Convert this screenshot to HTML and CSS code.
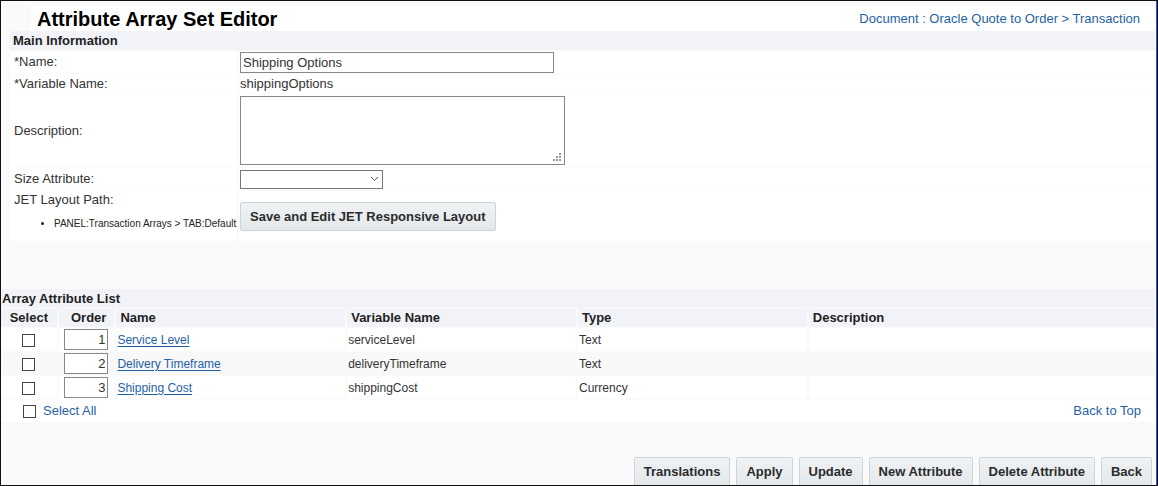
FILE: index.html
```html
<!DOCTYPE html>
<html lang="en">

<head>
  <meta charset="UTF-8">
  <meta name="viewport" content="width=device-width, initial-scale=1.0">
  <link rel="stylesheet" href="styles.css">
  <title>Attribute Array Set Editor</title>
</head>

<body>
  <form class="page" id="top">
    <div class="header">
      <h1>Attribute Array Set Editor</h1>
      <a href="#">Document : Oracle Quote to Order &gt; Transaction</a>
    </div>

    <div class="mainInfo">
      <h2>Main Information</h2>
      <div class="field nameField">
        <label for="name">*Name:</label>
        <div class="value"><input type="text" id="name" value="Shipping Options"></div>
      </div>
      <div class="field varField">
        <span class="label">*Variable Name:</span>
        <div class="value">shippingOptions</div>
      </div>
      <div class="field descField">
        <label for="description">Description:</label>
        <div class="value"><textarea id="description"></textarea></div>
      </div>
      <div class="field sizeField">
        <label for="size">Size Attribute:</label>
        <div class="value">
          <select id="size">
            <option></option>
          </select>
        </div>
      </div>
      <div class="field layoutField">
        <div class="label">
          JET Layout Path:
          <ul>
            <li>PANEL:Transaction Arrays &gt; TAB:Default</li>
          </ul>
        </div>
        <div class="value"><button type="button" class="btn">Save and Edit JET Responsive Layout</button></div>
      </div>
    </div>

    <div class="attrList">
      <h2 id="listTitle">Array Attribute List</h2>
      <table aria-labelledby="listTitle">
        <colgroup>
          <col class="narrow">
          <col class="narrow">
          <col class="medium">
          <col class="medium">
          <col class="medium">
          <col>
        </colgroup>
        <thead>
          <tr>
            <th class="center">Select</th>
            <th class="right">Order</th>
            <th>Name</th>
            <th>Variable Name</th>
            <th>Type</th>
            <th>Description</th>
          </tr>
        </thead>
        <tbody>
          <tr>
            <td class="select"><input type="checkbox" aria-label="Select Service Level"></td>
            <td class="order"><input type="text" value="1" aria-label="Order of Service Level"></td>
            <td><a href="#">Service Level</a></td>
            <td>serviceLevel</td>
            <td>Text</td>
            <td></td>
          </tr>
          <tr>
            <td class="select"><input type="checkbox" aria-label="Select Delivery Timeframe"></td>
            <td class="order"><input type="text" value="2" aria-label="Order of Delivery Timeframe"></td>
            <td><a href="#">Delivery Timeframe</a></td>
            <td>deliveryTimeframe</td>
            <td>Text</td>
            <td></td>
          </tr>
          <tr>
            <td class="select"><input type="checkbox" aria-label="Select Shipping Cost"></td>
            <td class="order"><input type="text" value="3" aria-label="Order of Shipping Cost"></td>
            <td><a href="#">Shipping Cost</a></td>
            <td>shippingCost</td>
            <td>Currency</td>
            <td></td>
          </tr>
        </tbody>
      </table>
      <div class="listFooter">
        <label><input type="checkbox" id="selectAll">Select All</label>
        <a href="#top">Back to Top</a>
      </div>
    </div>

    <div class="actions">
      <button type="button" class="btn">Translations</button>
      <button type="button" class="btn">Apply</button>
      <button type="button" class="btn">Update</button>
      <button type="button" class="btn">New Attribute</button>
      <button type="button" class="btn">Delete Attribute</button>
      <button type="button" class="btn">Back</button>
    </div>
  </form>
  <script>
    var selectAll = document.getElementById('selectAll');
    var boxes = document.querySelectorAll('.select input');

    selectAll.onchange = function () {
      for (var i = 0; i < boxes.length; i++) {
        boxes[i].checked = selectAll.checked;
      }
    }
  </script>
</body>

</html>
```
FILE: styles.css
```css
* {
  margin: 0;
  padding: 0;
  box-sizing: border-box;
}

body {
  font-family: "Liberation Sans", Arial, sans-serif;
  font-size: 13px;
  line-height: 16px;
  color: #333;
  background-color: #fafafa;
}

input,
textarea,
select,
button {
  font-family: inherit;
  font-size: 13px;
  color: #333;
}

a {
  color: #1f62a3;
  text-decoration: none;
}

h2 {
  height: 20px;
  padding-left: 1px;
  font-size: 13px;
  line-height: 19px;
  color: #222;
  background-color: #f2f3f8;
  border-bottom: 1px solid #fafafa;
}

.page {
  height: 100vh;
  overflow: hidden;
  padding: 6px 2px 0 0;
  border: 1px solid #111;
  box-shadow: inset -1px 0 0 #3a50c8;
}

.header {
  display: flex;
  justify-content: space-between;
  align-items: center;
  height: 24px;
  margin-left: 30px;
  padding: 0 15px 0 6px;
  background-color: #fff;
}

.header h1 {
  font-size: 20px;
  line-height: 24px;
  color: #000;
}

/* main information */

.mainInfo {
  margin: 0 0 47px 9px;
}

.mainInfo h2 {
  padding-left: 3px;
}

.field {
  display: flex;
  border-bottom: 1px solid #fafafa;
}

.field > label,
.field > .label {
  display: flex;
  flex-shrink: 0;
  align-items: center;
  width: 20%;
  padding-left: 4px;
  background-color: #fff;
  border-right: 2px solid #fafafa;
}

.field .value {
  display: flex;
  flex: 1;
  align-items: center;
  padding-left: 1px;
  background-color: #fff;
}

.nameField {
  height: 23px;
}

.varField {
  height: 20px;
}

.descField {
  height: 74px;
}

.sizeField {
  height: 23px;
}

.layoutField {
  height: 51px;
}

.nameField input {
  width: 314px;
  height: 21px;
  padding: 0 2px;
  border: 1px solid #888;
}

.descField textarea {
  width: 325px;
  height: 69px;
  padding: 2px;
  border: 1px solid #888;
}

.descField textarea::-webkit-resizer {
  background: url("data:image/svg+xml,%3Csvg xmlns='http://www.w3.org/2000/svg' width='15' height='15' fill='%23999'%3E%3Cpath d='M10 4h2v2h-2zM7 7h2v2h-2zM10 7h2v2h-2zM4 10h2v2h-2zM7 10h2v2h-2zM10 10h2v2h-2z'/%3E%3C/svg%3E") no-repeat right bottom;
}

.sizeField select {
  appearance: none;
  width: 143px;
  height: 19px;
  padding: 0 20px 0 3px;
  border: 1px solid #777;
  border-radius: 0;
  background: #fff url("data:image/svg+xml,%3Csvg xmlns='http://www.w3.org/2000/svg' width='9' height='6' fill='none' stroke='%23555'%3E%3Cpath d='M1 1l3.5 3.5L8 1'/%3E%3C/svg%3E") no-repeat right 3px center;
}

.layoutField > .label {
  display: block;
  padding-top: 1px;
}

.layoutField ul {
  margin-top: 8px;
  padding-left: 40px;
  font-size: 10px;
  line-height: 16px;
  color: #222;
  white-space: nowrap;
}

.btn {
  height: 29px;
  padding: 0 9px;
  font-weight: bold;
  color: #2b2b2b;
  white-space: nowrap;
  background: linear-gradient(#f0f2f4, #e3e8eb);
  border: 1px solid #cdd5dc;
  border-radius: 2px;
  cursor: pointer;
}

.btn:hover {
  background: #dde3e8;
}

/* attribute list */

.attrList table {
  width: 100%;
  table-layout: fixed;
  border-collapse: separate;
  border-spacing: 0;
}

.narrow {
  width: 5%;
}

.medium {
  width: 20%;
}

.attrList th,
.attrList td {
  text-align: left;
  vertical-align: middle;
  border-right: 2px solid #fafafa;
  border-bottom: 1px solid #fafafa;
}

.attrList th:last-child,
.attrList td:last-child {
  border-right: 0;
}

.attrList th {
  height: 19px;
  padding: 0 4px;
  color: #222;
  background-color: #f2f3f8;
}

.attrList th.center {
  text-align: center;
}

.attrList th.right {
  padding-right: 8px;
  text-align: right;
}

.attrList td {
  height: 24px;
  padding: 0 1px;
  font-size: 12px;
  background-color: #fff;
}

.attrList tr:nth-child(even) td {
  background-color: #f8f8f8;
}

.attrList td a {
  text-decoration: underline;
  text-underline-offset: 2px;
}

.attrList .select {
  text-align: center;
}

.attrList .order {
  padding-right: 6px;
  text-align: right;
}

.order input {
  display: block;
  width: 44px;
  height: 21px;
  margin-left: auto;
  padding: 0 2px;
  text-align: right;
  border: 1px solid #888;
}

input[type="checkbox"] {
  appearance: none;
  display: inline-block;
  width: 13px;
  height: 13px;
  vertical-align: middle;
  background-color: #fff;
  border: 1px solid #444;
}

input[type="checkbox"]:checked {
  background-color: #1f62a3;
  box-shadow: inset 0 0 0 2px #fff;
}

.listFooter {
  display: flex;
  justify-content: space-between;
  align-items: center;
  height: 22px;
  padding: 0 14px 0 22px;
  background-color: #fff;
}

.listFooter label {
  display: flex;
  align-items: center;
  gap: 7px;
  color: #1f62a3;
}

.actions {
  display: flex;
  justify-content: flex-end;
  gap: 6px;
  margin-top: 35px;
  padding-right: 3px;
}
```
